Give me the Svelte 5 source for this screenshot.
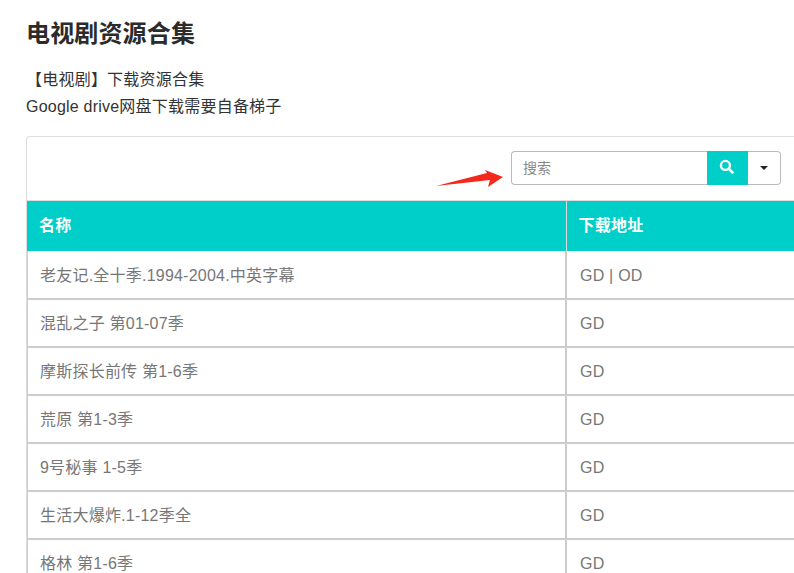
<script>
	const rows = [
		{ name: '老友记.全十季.1994-2004.中英字幕', link: 'GD | OD' },
		{ name: '混乱之子 第01-07季', link: 'GD' },
		{ name: '摩斯探长前传 第1-6季', link: 'GD' },
		{ name: '荒原 第1-3季', link: 'GD' },
		{ name: '9号秘事 1-5季', link: 'GD' },
		{ name: '生活大爆炸.1-12季全', link: 'GD' },
		{ name: '格林 第1-6季', link: 'GD' }
	];
</script>

<div class="page">
	<h1>电视剧资源合集</h1>
	<p class="first">【电视剧】下载资源合集</p>
	<p>Google drive网盘下载需要自备梯子</p>

	<div class="panel">
		<div class="toolbar">
			<svg class="arrow" width="70" height="22" viewBox="0 0 70 22">
				<path d="M1 20 L52 7 L50 4 L68 11 L53 21 L55 14 Z" fill="#f5281c" />
			</svg>
			<div class="search">
				<input type="text" placeholder="搜索" />
				<button class="go" aria-label="搜索">
					<svg class="lens" width="15" height="15" viewBox="0 0 14 14">
						<circle cx="6" cy="6" r="4.2" fill="none" stroke="#fff" stroke-width="2.2" />
						<path d="M9 9 L12.6 12.6" stroke="#fff" stroke-width="2.4" stroke-linecap="round" />
					</svg>
				</button>
				<button class="more" aria-label="更多"><span class="caret"></span></button>
			</div>
		</div>

		<table>
			<thead>
				<tr>
					<th>名称</th>
					<th>下载地址</th>
				</tr>
			</thead>
			<tbody>
				{#each rows as row}
					<tr>
						<td>{row.name}</td>
						<td>{row.link}</td>
					</tr>
				{/each}
			</tbody>
		</table>
	</div>
</div>

<style>
	:global(body) {
		margin: 0;
		background: #fff;
		overflow: hidden;
	}

	.page {
		width: 794px;
		height: 573px;
		overflow: hidden;
		box-sizing: border-box;
		padding: 19px 0 0 26px;
		font-family: 'Liberation Sans', 'Noto Sans CJK SC', sans-serif;
		color: #333;
	}

	h1 {
		margin: 0 0 17px;
		font-size: 24px;
		line-height: 30px;
		font-weight: 700;
		letter-spacing: 0.15px;
		color: #2b2b2b;
	}

	p {
		margin: 0;
		font-size: 16px;
		line-height: 27px;
		letter-spacing: 0.22px;
		color: #333;
	}

	.panel {
		width: 790px;
		margin-top: 16px;
		border: 1px solid #ddd;
		border-radius: 4px 0 0 0;
		border-right: 0;
	}

	.toolbar {
		height: 63px;
		display: flex;
		justify-content: flex-end;
		align-items: flex-start;
		padding-right: 36px;
		position: relative;
	}

	.arrow {
		position: absolute;
		left: 408px;
		top: 29px;
	}

	.search {
		display: flex;
		width: 270px;
		height: 34px;
		margin-top: 14px;
	}

	input {
		flex: 1;
		min-width: 0;
		box-sizing: border-box;
		border: 1px solid #bbb;
		border-right: 0;
		border-radius: 4px 0 0 4px;
		padding: 0 11px;
		font: 14px 'Liberation Sans', 'Noto Sans CJK SC', sans-serif;
		outline: none;
	}

	input::placeholder {
		color: #888;
	}

	button {
		padding: 0;
		display: flex;
		align-items: center;
		justify-content: center;
	}

	.go {
		width: 41px;
		background: #00cec9;
		border: 0;
	}

	.lens {
		margin: 0 2px 3px 0;
	}

	.more {
		width: 33px;
		background: #fff;
		border: 1px solid #bbb;
		border-left: 0;
		border-radius: 0 4px 4px 0;
	}

	.caret {
		border-top: 4px solid #222;
		border-left: 4px solid transparent;
		border-right: 4px solid transparent;
	}

	table {
		width: 100%;
		table-layout: fixed;
		border-collapse: collapse;
	}

	th,
	td {
		box-sizing: border-box;
		line-height: 20px;
		letter-spacing: 0.22px;
	}

	th:first-child,
	td:first-child {
		width: 539px;
	}

	td:first-child {
		box-shadow: inset 1px 0 #ccc;
	}

	th {
		height: 50px;
		padding: 1px 12px 0;
		background: #00cec9;
		color: #fff;
		font-size: 16px;
		font-weight: 700;
		text-align: left;
		border-right: 1px solid #ddd;
		border-top: 1px solid #ddd;
	}

	td {
		height: 48px;
		padding: 2px 13px 0;
		font-size: 16px;
		color: #777;
		border-bottom: 2px solid #ccc;
		border-right: 2px solid #ccc;
	}

	tbody tr:first-child td {
		padding-top: 4px;
	}
</style>
